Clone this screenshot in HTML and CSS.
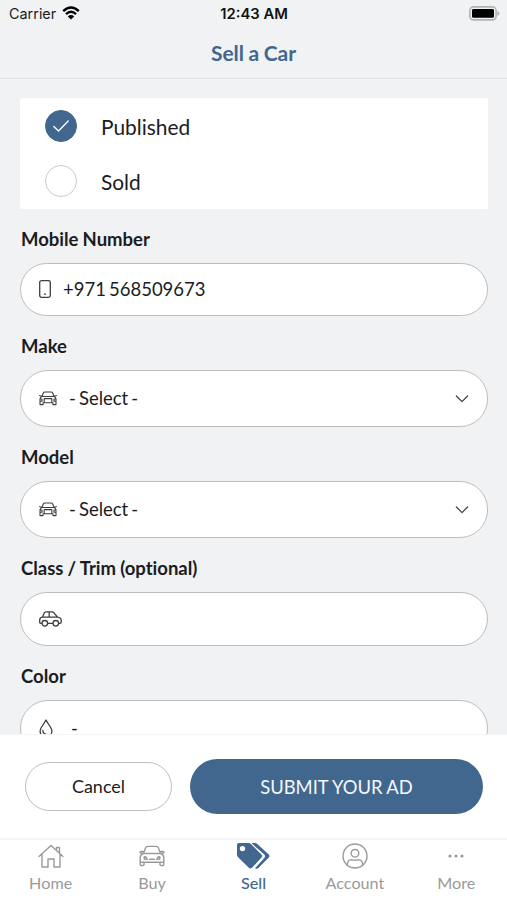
FILE: index.html
```html
<!DOCTYPE html>
<html lang="en">
<head>
<meta charset="utf-8">
<title>Sell a Car</title>
<link rel="stylesheet" href="styles.css">
</head>
<body>
<svg width="0" height="0" class="defs" aria-hidden="true">
  <symbol id="car-small" viewBox="0 0 18 15">
    <path d="M3 5.5 4.3 2Q4.7 1 5.8 1H12.2Q13.3 1 13.7 2L15 5.5M3 5.5H15Q17 6.2 17 8V13.6H14V11.8H4V13.6H1V8Q1 6.2 3 5.5ZM.6 4.6 3 5.5M17.4 4.6 15 5.5M5.2 7.6H12.8V11.8M5.2 7.6V11.8M1.2 8H3V10.2H1.2M16.8 8H15V10.2H16.8"/>
  </symbol>
  <symbol id="chevron" viewBox="0 0 14 8"><path d="M1.4 1 7 6.6 12.6 1"/></symbol>
</svg>
<div class="screen">
  <div class="status">
    <div class="carrier">Carrier
      <svg class="wifi" viewBox="0 0 18 14"><path d="M1.2 5.2Q9-2.2 16.8 5.2M4 8.2Q9 3.5 14 8.2"/><path class="dot" d="M9 13.6 5.8 10.4Q9 7.7 12.2 10.4Z"/></svg>
    </div>
    <div class="time">12:43 AM</div>
    <svg class="battery" viewBox="0 0 31 15"><rect x=".9" y=".9" width="26.2" height="13" rx="3.6"/><rect class="level" x="3" y="3" width="22" height="8.8" rx="1.4"/><path class="tip" d="M28.3 5Q30.5 5.6 30.5 7.4T28.3 9.8Z"/></svg>
  </div>
  <header>Sell a Car</header>
  <main>
    <div class="choices">
      <div class="choice"><span class="radio checked"><svg viewBox="0 0 16 12"><path d="M.8 6.5 5.5 11 15.2 1"/></svg></span><span>Published</span></div>
      <div class="choice"><span class="radio"></span><span>Sold</span></div>
    </div>
    <label>Mobile Number</label>
    <div class="field phone"><svg class="ico" width="12" height="18" viewBox="0 0 12 18"><rect x=".7" y=".7" width="10.6" height="16.6" rx="1.8"/><path d="M5.5 14.2H6.5"/></svg><span>+971 568509673</span></div>
    <label>Make</label>
    <div class="field select"><svg class="ico car" width="18" height="15"><use href="#car-small"/></svg><span>- Select -</span><svg class="chev" width="14" height="8"><use href="#chevron"/></svg></div>
    <label>Model</label>
    <div class="field select"><svg class="ico car" width="18" height="15"><use href="#car-small"/></svg><span>- Select -</span><svg class="chev" width="14" height="8"><use href="#chevron"/></svg></div>
    <label>Class / Trim (optional)</label>
    <div class="field"><svg class="ico" width="23" height="16" viewBox="0 0 23 16"><path d="M2.8 12.3H1.5Q.7 12.3.7 11V9Q.7 6.4 3.5 6.2L5.2 2Q5.7.8 7 .8H13Q14.2.8 15 1.8L18.5 6.2Q22.2 6.6 22.2 9.2V11Q22.2 12.3 21 12.3H19.8M8.8 12.3H13.8M3.5 6.2H18.5M10.2.8V6.2"/><circle cx="5.8" cy="12.3" r="2.8"/><circle cx="16.8" cy="12.3" r="2.8"/></svg></div>
    <label>Color</label>
    <div class="field select color"><svg class="ico" width="14" height="19" viewBox="0 0 14 19"><path d="M7 1Q9 4.5 11.4 8Q13.2 10.8 12.8 13Q11.8 18 7 18T1.2 13Q.8 10.8 2.6 8Q5 4.5 7 1ZM3.8 11.5Q4 14.6 7 15.2"/></svg><span>-</span></div>
  </main>
  <footer>
    <button class="cancel">Cancel</button>
    <button class="submit">SUBMIT YOUR AD</button>
  </footer>
  <nav>
    <div class="tab"><svg width="26" height="24" viewBox="0 0 26 24"><path d="M1 12.4 13 1.4 25 12.4M4 10V23H10V15H16V23H22V10M18.5 5.5V3.5H21.5V8.5"/></svg>Home</div>
    <div class="tab"><svg width="26" height="24" viewBox="0 0 26 24"><path d="M4.5 9.5 6.7 3.6Q7.1 2.4 8.5 2.4H17.5Q18.9 2.4 19.3 3.6L21.5 9.5M4.5 9.5H21.5Q24.8 10.5 24.8 14V20.5Q24.8 21.5 23.8 21.5H22Q21 21.5 21 20.5V18.3H5V20.5Q5 21.5 4 21.5H2.2Q1.2 21.5 1.2 20.5V14Q1.2 10.5 4.5 9.5ZM4 7.5H1.8Q.8 7.5 1 8.7L3.6 9.5M22 7.5H24.2Q25.2 7.5 25 8.7L22.4 9.5M10.5 15.2H15.5M1.3 18.3H5M21 18.3H24.7M5.2 12.8V15.2H8.2Q8 13.2 5.2 12.8ZM20.8 12.8V15.2H17.8Q18 13.2 20.8 12.8Z"/></svg>Buy</div>
    <div class="tab active"><svg width="34" height="28" viewBox="0 0 34 28"><path class="solid" fill-rule="evenodd" d="M3 1H12.5Q14 1 15 2L25.5 12.4Q27 14 25.5 15.6L16 25.8Q14.4 27.4 12.8 25.8L1.9 15Q1 14 1 12.6V3Q1 1 3 1ZM6.5 3.9A2.7 2.7 0 1 0 6.5 9.3A2.7 2.7 0 1 0 6.5 3.9Z"/><path class="solid" d="M16.6 1H19Q20.3 1 21.3 2L32.8 12.5Q34.2 14 32.8 15.6L22.4 26Q21 27.3 19 26.2L28.3 15.9Q29.8 14.1 28.3 12.5L16.2 1.8Q15.6 1 16.6 1Z"/></svg>Sell</div>
    <div class="tab"><svg width="26" height="26" viewBox="0 0 26 26"><circle cx="13" cy="13" r="12"/><circle cx="13" cy="10.3" r="3.8"/><path d="M5.2 22.2Q5.5 16.6 9.5 16.6Q13 18 16.5 16.6Q20.5 16.6 20.8 22.2"/></svg>Account</div>
    <div class="tab"><svg width="18" height="6" viewBox="0 0 18 6"><g class="solid"><circle cx="3" cy="3" r="1.6"/><circle cx="9" cy="3" r="1.6"/><circle cx="15" cy="3" r="1.6"/></g></svg>More</div>
  </nav>
</div>
</body>
</html>
```
FILE: styles.css
```css
* { box-sizing: border-box; }
body { margin: 0; font-family: Lato, sans-serif; color: #1b1c1e; font-variant-ligatures: none; }
svg { display: block; fill: none; stroke: currentColor; stroke-linecap: round; stroke-linejoin: round; flex-shrink: 0; }
.defs { display: none; }
.screen { width: 507px; height: 900px; display: flex; flex-direction: column; background: #f0f2f4; overflow: hidden; }

.status { height: 28px; flex-shrink: 0; display: grid; grid-template-columns: 1fr auto 1fr; align-items: center; padding: 0 7px 0 9px; font: 14.4px/28px Inter, sans-serif; }
.carrier { display: flex; align-items: center; gap: 6px; }
.wifi { width: 18px; height: 14px; stroke: #000; stroke-width: 2.4; stroke-linecap: butt; margin-top: -2px; }
.wifi .dot { fill: #000; stroke: none; }
.time { font-weight: 600; font-size: 14.8px; color: #111; margin-right: 1px; }
.battery { width: 31px; height: 15px; justify-self: end; stroke: #b3b5b4; stroke-width: 1.6; margin-top: -1px; }
.battery .level { fill: #000; stroke: none; }
.battery .tip { fill: #b3b5b4; stroke: none; }

header { height: 51px; flex-shrink: 0; border-bottom: 1px solid #e1e3e5; text-align: center; font-size: 21px; line-height: 50px; font-weight: 700; color: #42678f; word-spacing: -0.6px; }

main { flex: 1; min-height: 0; overflow: hidden; padding: 19px 19px 0 20px; }
.choices { background: #fff; height: 110.5px; border-radius: 2px; }
.choice { height: 55px; display: flex; align-items: center; gap: 24px; padding-left: 25px; font-size: 20.9px; }
.choice > span:last-child:not(.radio) { padding-top: 1px; }
.radio { width: 32px; height: 32px; border: 1.5px solid #cbcbcb; border-radius: 50%; display: flex; align-items: center; justify-content: center; }
.radio.checked { background: #42678f; border-color: #42678f; color: #fff; }
.radio svg { width: 16px; height: 12px; stroke-width: 1.3; }
label { display: block; height: 54px; padding: 18px 0 0 1px; font-size: 18.5px; line-height: 24px; font-weight: 700; word-spacing: -0.4px; }
.field { height: 53.5px; border: 1.5px solid #bdbdbd; border-radius: 28px; background: #fff; display: flex; align-items: center; padding: 0 18px; font-size: 18.5px; word-spacing: -1.7px; }
.field.phone { gap: 12px; }
.field.select { height: 57px; gap: 12px; }
.select span { margin-top: -1px; }
.ico { color: #3c3e40; stroke-width: 1.3; }
.ico.car { stroke-width: 1.1; }
.chev { margin-left: auto; color: #444; stroke-width: 1.3; }
.field.color { gap: 18px; }

footer { height: 104px; flex-shrink: 0; background: #fff; border-top: 1px solid #f4f5f6; display: flex; align-items: center; gap: 18px; padding: 0 24px 0 25px; }
button { font-family: inherit; font-size: 18px; padding: 0; }
.cancel { width: 147px; height: 49px; border: 1.5px solid #bdbdbd; border-radius: 25px; background: #fff; color: #1b1c1e; padding-bottom: 1px; }
.submit { flex: 1; height: 55px; border: 0; border-radius: 28px; background: #42678f; color: #f4f8fc; font-size: 18.4px; word-spacing: -0.2px; }

nav { height: 62px; flex-shrink: 0; background: #fff; border-top: 2px solid #f5f5f5; display: grid; grid-template-columns: repeat(5, 1fr); }
.tab { display: grid; grid-template-rows: 32px 22px; justify-items: center; align-items: center; font-size: 16.2px; line-height: 22px; color: #9a9a9a; }
.tab svg { stroke-width: 1.4; }
.tab .solid { fill: currentColor; stroke: none; }
.tab.active { color: #42678f; font-weight: 500; }
```
